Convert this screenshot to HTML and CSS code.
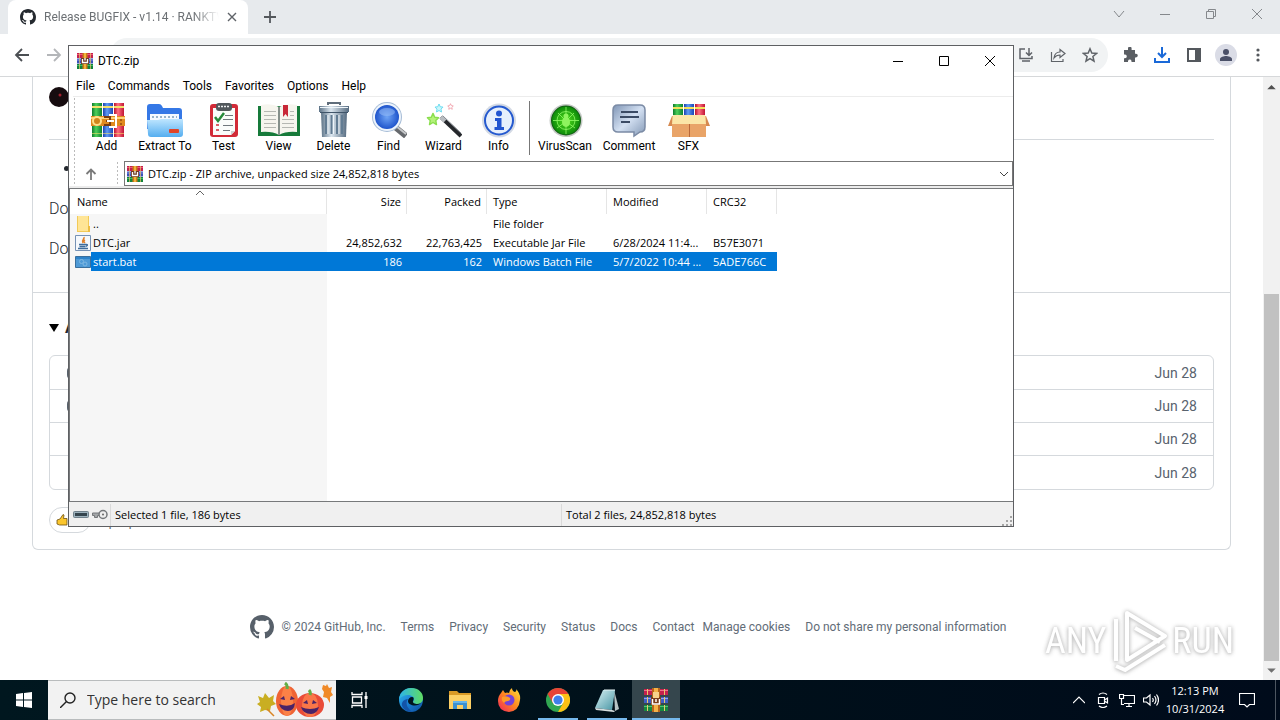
FILE: index.html
```html
<!DOCTYPE html>
<html lang="en">
<head>
<meta charset="utf-8">
<title>Desktop</title>
<link rel="stylesheet" href="styles.css">
</head>
<body>
<svg class="defs" aria-hidden="true">
  <defs>
    <linearGradient id="gRed" x1="0" x2="1" y1="0" y2="0"><stop offset="0" stop-color="#b81230"/><stop offset=".4" stop-color="#ff6f80"/><stop offset="1" stop-color="#c01535"/></linearGradient>
    <linearGradient id="gBlue" x1="0" x2="1" y1="0" y2="0"><stop offset="0" stop-color="#1d3fae"/><stop offset=".4" stop-color="#5f9cf5"/><stop offset="1" stop-color="#1a45b5"/></linearGradient>
    <linearGradient id="gGreen" x1="0" x2="1" y1="0" y2="0"><stop offset="0" stop-color="#0c7a2c"/><stop offset=".4" stop-color="#4fd05a"/><stop offset="1" stop-color="#0d8030"/></linearGradient>
    <linearGradient id="gFolder" x1="0" x2="0" y1="0" y2="1"><stop offset="0" stop-color="#bfe6ff"/><stop offset="1" stop-color="#55aef0"/></linearGradient>
    <linearGradient id="gSteel" x1="0" x2="1" y1="0" y2="0"><stop offset="0" stop-color="#5c7286"/><stop offset=".4" stop-color="#dbe6ef"/><stop offset="1" stop-color="#566b80"/></linearGradient>
    <linearGradient id="gBubble" x1="0" x2="1" y1="0" y2="1"><stop offset="0" stop-color="#7f95b5"/><stop offset=".5" stop-color="#d3e0f2"/><stop offset="1" stop-color="#8398b5"/></linearGradient>
    <radialGradient id="gLens"><stop offset="0" stop-color="#6fa4f5"/><stop offset="1" stop-color="#1f55cc"/></radialGradient>
    <radialGradient id="gScan"><stop offset="0" stop-color="#52e01c"/><stop offset="1" stop-color="#0d8a0a"/></radialGradient>
    <linearGradient id="gEdge" x1="0" x2="1" y1="0" y2="1"><stop offset="0" stop-color="#35c0ec"/><stop offset=".5" stop-color="#1a7fd4"/><stop offset="1" stop-color="#0c4d9b"/></linearGradient>
    <linearGradient id="gEdge2" x1="0" x2="1" y1="0" y2="0"><stop offset="0" stop-color="#2cb5ec"/><stop offset="1" stop-color="#5fdc62"/></linearGradient>
    <linearGradient id="gFox" x1="1" x2="0" y1="0" y2="1"><stop offset="0" stop-color="#ffe43a"/><stop offset=".5" stop-color="#ff8420"/><stop offset="1" stop-color="#f02060"/></linearGradient>
    <linearGradient id="gNote" x1="0" x2="1" y1="0" y2="1"><stop offset="0" stop-color="#d9f2f4"/><stop offset="1" stop-color="#4795a4"/></linearGradient>
    <symbol id="octocat" viewBox="0 0 16 16"><path d="M8 0c4.42 0 8 3.58 8 8a8.013 8.013 0 0 1-5.45 7.59c-.4.08-.55-.17-.55-.38 0-.27.01-1.13.01-2.2 0-.75-.25-1.23-.54-1.48 1.78-.2 3.65-.88 3.65-3.95 0-.88-.31-1.59-.82-2.15.08-.2.36-1.02-.08-2.12 0 0-.67-.22-2.2.82-.64-.18-1.32-.27-2-.27-.68 0-1.36.09-2 .27-1.53-1.03-2.2-.82-2.2-.82-.44 1.1-.16 1.92-.08 2.12-.51.56-.82 1.28-.82 2.15 0 3.06 1.86 3.75 3.64 3.95-.23.2-.44.55-.51 1.07-.46.21-1.61.55-2.33-.66-.15-.24-.6-.83-1.23-.82-.67.01-.27.38.01.53.34.19.73.9.82 1.13.16.45.68 1.31 2.69.94 0 .67.01 1.3.01 1.49 0 .21-.15.45-.55.38A7.995 7.995 0 0 1 0 8c0-4.42 3.58-8 8-8Z"/></symbol>
    <symbol id="star" viewBox="0 0 20 20"><path stroke-width="2" stroke-linejoin="round" d="M10 2l2.500 5.500 5.500.700-4 4 1 5.800-5-3-5 3 1-5.800-4-4 5.500-.7z"/></symbol>
    <symbol id="rar" viewBox="0 0 16 16">
      <path fill="#c4204e" d="M0 0h16v5H0z"/><path fill="#3a52b8" d="M0 5.500h16v5H0z"/><path fill="#12823c" d="M0 11h16v5H0z"/>
      <path fill="#ef5a76" d="M0 1h16v1H0z"/><path fill="#7d8de8" d="M0 6.500h16v1H0z"/><path fill="#41b765" d="M0 12h16v1H0z"/>
      <path fill="#e8c86c" d="M2 0h.7v5H2zm11.300 0h.7v5h-.7zM2 5.500h.7v5H2zm11.300 0h.7v5h-.7zM2 11h.7v5H2zm11.300 0h.7v5h-.7z"/>
      <path fill="#cc7a1a" d="M5.500 0h5v16h-5z"/><path fill="#f1b33c" d="M7 0h2v16H7z"/>
      <path fill="#6e3a20" d="M4 5h8v6H4z"/><path fill="none" stroke="#fff" stroke-width="1.300" d="M5.500 6v3.500h5V6M8 5v2.500"/>
    </symbol>
  </defs>
</svg>

<main class="browser">
  <header class="tabstrip">
    <div class="tab">
      <svg class="i16"><use href="#octocat"/></svg>
      <span class="tab-title">Release BUGFIX - v1.14 · RANKTV</span>
      <button class="bare" aria-label="Close tab"><svg class="i10" viewBox="0 0 10 10" stroke="#5f6368" stroke-width="1.400"><path d="M1 1l8 8M9 1L1 9"/></svg></button>
    </div>
    <button class="bare newtab" aria-label="New tab"><svg class="i12" viewBox="0 0 12 12" stroke="#54585c" stroke-width="1.800"><path d="M6 0v12M0 6h12"/></svg></button>
    <div class="caption">
      <button class="bare" aria-label="Search tabs"><svg class="i12" viewBox="0 0 12 12"><path d="M1 3l5 6 5-6"/></svg></button>
      <button class="bare" aria-label="Minimize"><svg class="i12" viewBox="0 0 12 12"><path d="M1 6.500h10"/></svg></button>
      <button class="bare" aria-label="Restore"><svg class="i12" viewBox="0 0 12 12"><path d="M1.500 3.500h7v7h-7zM3.500 3.500v-2h7v7h-2"/></svg></button>
      <button class="bare" aria-label="Close"><svg class="i12" viewBox="0 0 12 12"><path d="M1 1l10 10M11 1L1 11"/></svg></button>
    </div>
  </header>
  <nav class="toolbar">
    <button class="bare tool" aria-label="Back"><svg class="i16" viewBox="0 0 16 16" fill="none" stroke="#4b4f53" stroke-width="1.800"><path d="M15 8H2M8 2L2 8l6 6"/></svg></button>
    <button class="bare tool" aria-label="Forward"><svg class="i16" viewBox="0 0 16 16" fill="none" stroke="#b4b6b9" stroke-width="1.800"><path d="M1 8h13M8 2l6 6-6 6"/></svg></button>
    <button class="bare tool" aria-label="Reload"></button>
    <div class="omnibox">
      <input aria-label="Address">
      <button class="bare tool" aria-label="Install"><svg class="i16" viewBox="0 0 16 16" fill="none" stroke="#5f6368" stroke-width="1.500"><path d="M7 2H2v9.500h12V9M4 14h8M11 1v7M8 5.500l3 3 3-3"/></svg></button>
      <button class="bare tool" aria-label="Share"><svg class="i16" viewBox="0 0 16 16" fill="none" stroke="#5f6368" stroke-width="1.200"><path d="M1.500 5v9.500H13V12M4 11c.5-4 3-6 6-6V2.500l5 4-5 4V8c-3 0-4.500 1-6 3z"/></svg></button>
      <button class="bare tool" aria-label="Bookmark"><svg class="i16" viewBox="0 0 16 16" fill="none" stroke="#5f6368" stroke-width="1.500"><path d="M8 1.800l1.800 4.300 4.700.4-3.600 3 1.100 4.600-4-2.500-4 2.500 1.100-4.600-3.600-3 4.700-.4z"/></svg></button>
    </div>
    <button class="bare tool" aria-label="Extensions"><svg class="i16" viewBox="0 0 16 16" fill="#5a5e63"><path d="M6 1.500a1.800 1.800 0 0 1 3.600 0V3H13v3.800h1a1.800 1.800 0 0 1 0 3.600h-1V15H9.500v-1a1.800 1.800 0 0 0-3.500 0v1H2v-3.800h1a1.800 1.800 0 0 0 0-3.600H2V3h4z"/></svg></button>
    <button class="bare tool" aria-label="Downloads"><svg class="i16" viewBox="0 0 16 16" fill="none" stroke="#1a69d8" stroke-width="2"><path d="M8 0v10M4 6l4 4 4-4M1 11v4h14v-4"/></svg></button>
    <button class="bare tool" aria-label="Side panel"><svg class="i16" viewBox="0 0 16 16"><path fill="none" stroke="#54585d" stroke-width="2" d="M2 2h12v12H2z"/><path fill="#54585d" d="M9 2h5v12H9z"/></svg></button>
    <button class="bare tool" aria-label="Profile"><svg class="i22" viewBox="0 0 22 22"><circle cx="11" cy="11" r="11" fill="#dadce6"/><circle cx="11" cy="8" r="3" fill="#4a5068"/><path fill="#4a5068" d="M5 17v-2c0-2 4-3 6-3s6 1 6 3v2z"/></svg></button>
    <button class="bare tool" aria-label="Menu"><svg class="i16" viewBox="0 0 16 16" fill="#54585d"><circle cx="8" cy="3" r="1.600"/><circle cx="8" cy="8" r="1.600"/><circle cx="8" cy="13" r="1.600"/></svg></button>
  </nav>
  <div class="viewport">
    <div class="page">
      <article class="release">
        <section class="notes">
          <svg class="avatar" viewBox="0 0 20 20"><circle cx="10" cy="10" r="10" fill="#160c0f"/><circle cx="11" cy="8" r="1.500" fill="#a3202e"/></svg>
          <hr>
          <ul class="changes"><li></li></ul>
          <p>Do</p>
          <p>Do</p>
        </section>
        <section class="assets">
          <h3><svg class="i10" viewBox="0 0 10 10"><path d="M0 1h10L5 9z"/></svg>Assets</h3>
          <ul class="files">
            <li><svg class="i16" viewBox="0 0 16 16"><rect x="2" y="3" width="13" height="10" rx="3" fill="none" stroke="#59636e" stroke-width="2"/></svg><time>Jun 28</time></li>
            <li><svg class="i16" viewBox="0 0 16 16"><rect x="2" y="3" width="13" height="10" rx="3" fill="none" stroke="#59636e" stroke-width="2"/></svg><time>Jun 28</time></li>
            <li><svg class="i16" viewBox="0 0 16 16"><path fill="none" stroke="#59636e" stroke-width="1.500" d="M3 1h11v14H3z"/></svg><time>Jun 28</time></li>
            <li><svg class="i16" viewBox="0 0 16 16"><path fill="none" stroke="#59636e" stroke-width="1.500" d="M3 1h11v14H3z"/></svg><time>Jun 28</time></li>
          </ul>
          <div class="reactions">
            <button class="pill" aria-label="Thumbs up"><svg class="i12" viewBox="0 0 12 12"><path fill="#fbc62d" stroke="#6e5210" stroke-width=".8" d="M1 6l3-1 3-4.500 1 .5-.5 3.500H11v6.500H3.500L1 10z"/></svg></button>
            <span>2 people reacted</span>
          </div>
        </section>
      </article>
      <footer class="footer">
        <svg class="i24"><use href="#octocat"/></svg>
        <span class="copy">© 2024 GitHub, Inc.</span>
        <a href="#">Terms</a><a href="#">Privacy</a><a href="#">Security</a><a href="#">Status</a><a href="#">Docs</a><a href="#" class="tight">Contact</a><button class="bare">Manage cookies</button><button class="bare">Do not share my personal information</button>
      </footer>
    </div>
    <div class="scrollbar">
      <svg viewBox="0 0 16 18"><path fill="#505050" d="M4 11.500l4-4 4 4z"/></svg>
      <div class="track"><div class="thumb"></div></div>
      <svg viewBox="0 0 16 18"><path fill="#707070" d="M4 7l4 4 4-4z"/></svg>
    </div>
  </div>
</main>

<section class="window" aria-label="DTC.zip">
  <header class="titlebar">
    <svg class="i16"><use href="#rar"/></svg>
    <h1>DTC.zip</h1>
    <button class="bare" aria-label="Minimize"><svg class="i12" viewBox="0 0 12 12"><path d="M1 6.500h10"/></svg></button>
    <button class="bare" aria-label="Maximize"><svg class="i12" viewBox="0 0 12 12"><path d="M1.500 1.500h9v9h-9z"/></svg></button>
    <button class="bare" aria-label="Close"><svg class="i12" viewBox="0 0 12 12"><path d="M1 1l10 10M11 1L1 11"/></svg></button>
  </header>
  <nav class="menu">
    <button class="bare">File</button><button class="bare">Commands</button><button class="bare">Tools</button><button class="bare">Favorites</button><button class="bare">Options</button><button class="bare">Help</button>
  </nav>
  <div class="actions">
    <button class="bare"><svg viewBox="0 0 36 36">
      <path fill="url(#gGreen)" d="M3 1h10v34H3z"/><path fill="url(#gBlue)" d="M14 1h10v34H14z"/><path fill="url(#gRed)" d="M25 1h10v34H25z"/>
      <path fill="#f4e06a" d="M3 4h10v2H3zm11 0h10v2H14zm11 0h10v2H25z"/><path fill="#f4e06a" opacity=".6" d="M3 31h10v1H3zm11 0h10v1H14zm11 0h10v1H25z"/>
      <path fill="#e08a20" d="M2 14h34v10H2z"/><path fill="#ffd37a" d="M2 15h34v2H2z"/><circle cx="8" cy="19" r="5" fill="#ffe08a"/><circle cx="8" cy="19" r="3" fill="#d0851c"/><path fill="#a65a14" d="M31 17h2v2h-2zm0 4h2v2h-2z"/>
      <path fill="none" stroke="#7a3d10" stroke-width="2" d="M15 15h6v8h-6M17 19h4"/><path fill="none" stroke="#fff" stroke-width="2" d="M20 13h7v12h-7M18 19h7"/></svg>Add</button>
    <button class="bare extract"><svg viewBox="0 0 36 36">
      <path fill="#3578e6" d="M0 5q0-3 3-3h9q2 0 3 2l1 2h16q3 0 3 3v18H0z"/><path fill="#f5faff" d="M3 12h29v10H3z"/><path stroke="#7a9dba" stroke-width="1.500" stroke-dasharray="2 2" d="M5 15h25"/>
      <path fill="url(#gFolder)" d="M0 18h11l3-1h22v15q0 3-3 3H4q-3 0-3-3z"/><rect x="22" y="27" width="10" height="4" rx="1" fill="#e04428"/></svg>Extract To</button>
    <button class="bare"><svg viewBox="0 0 36 36">
      <rect x="4" y="2" width="28" height="33" rx="3" fill="#d22b38"/><path fill="#fafcfb" d="M7 6h22v23l-4 4H7z"/><path fill="#cdd2d4" d="M29 29l-4 4v-4z"/><rect x="10" y="1" width="16" height="8" rx="3" fill="#52585c"/><path stroke="#eef0f1" stroke-width="1.500" stroke-dasharray="2 1" d="M12 4.500h12"/>
      <path fill="none" stroke="#258a3a" stroke-width="2.500" d="M9 15l3 4 6-8"/><path stroke="#70787e" d="M19 13.500h8M17 17.500h10M17 23.500h10M17 28.500h7"/><path stroke="#d22b38" stroke-width="1.500" d="M10 23h3M10 28h3"/></svg>Test</button>
    <button class="bare"><svg class="book" viewBox="0 0 44 36">
      <path fill="#167a3a" d="M1 4h42v30H1z"/><path fill="#f6f5ee" d="M4 3q11-2 18 2 7-4 18-2v27q-11-1-18 3-7-4-18-3z"/><path stroke="#85908a" stroke-width="2" d="M22 5v28"/>
      <path stroke="#b6b8b2" d="M7 9.500h12M7 13.500h12M7 17.500h12M7 21.500h12M7 25.500h12M25 17.500h12M25 21.500h12M25 25.500h12M33 13.500h4M33 9.500h4"/><path fill="#c82838" d="M26 3h5v12l-2.500-3-2.500 3z"/></svg>View</button>
    <button class="bare"><svg viewBox="0 0 36 36">
      <path fill="none" stroke="#5f6d7b" stroke-width="2" d="M12 3V1h12v2"/><path fill="url(#gSteel)" d="M3 4h30v6H3z"/><path fill="url(#gSteel)" d="M5 10h26l-1 25H6z"/><path stroke="#627c93" stroke-width="2" d="M10 13v19M15.500 13v19M21 13v19M26 13v19"/><path stroke="#eef5fa" d="M12 13v19M17.500 13v19M23 13v19M4 5.500h28"/><path stroke="#40556a" d="M4 10.500h28"/></svg>Delete</button>
    <button class="bare"><svg viewBox="0 0 36 36">
      <path stroke="#66696d" stroke-width="6" d="M24 25l11 9"/><path stroke="#c6c8ca" stroke-width="2" d="M25 24l10 8"/><circle cx="16" cy="15" r="15" fill="#a6bcd6"/><circle cx="16" cy="15" r="14" fill="#edf4fc"/><circle cx="16" cy="15" r="12" fill="url(#gLens)"/><ellipse cx="16" cy="10" rx="8" ry="4" fill="#9fc4fa" opacity=".5"/></svg>Find</button>
    <button class="bare"><svg viewBox="0 0 36 36">
      <path stroke="#25282c" stroke-width="4" d="M15 15l20 19"/><path stroke="#b8bcc0" stroke-width="4" d="M15 15l4 4"/><path stroke="#8b9096" d="M17 14l18 17"/>
      <use href="#star" x="0" y="10" width="14" height="14" fill="#b4f27a" stroke="#8ade4e"/><use href="#star" x="8" y="1" width="10" height="10" fill="#c9f7fc" stroke="#6cdcf0"/><use href="#star" x="21" y="1" width="7" height="7" fill="#fff" stroke="#ee8c98"/></svg>Wizard</button>
    <button class="bare"><svg viewBox="0 0 36 36">
      <circle cx="18" cy="18.500" r="17" fill="#d4dae4"/><circle cx="18" cy="18.500" r="14" fill="#e6effc" stroke="#2459cf" stroke-width="2"/><circle cx="18" cy="11.500" r="3" fill="#2154d0"/><path fill="#2154d0" d="M14 16h6.500v9H23v3H13.500v-3H16v-6h-2z"/></svg>Info</button>
    <span class="rule"></span>
    <button class="bare wide"><svg viewBox="0 0 36 36">
      <circle cx="19" cy="18.500" r="16.500" fill="#c5c9c6"/><circle cx="19" cy="18.500" r="15" fill="#145c14"/><circle cx="19" cy="18.500" r="14" fill="url(#gScan)"/><g fill="none" stroke="#92fb68" stroke-width=".8"><circle cx="19" cy="18.500" r="9"/><path d="M19 5v27M6 18.500h26M11 11l6 6M27 11l-6 6M10 26l7-5M28 26l-7-5"/></g><ellipse cx="19" cy="20" rx="4" ry="5" fill="#8ef45e"/><circle cx="19" cy="14" r="2.500" fill="#8ef45e"/></svg>VirusScan</button>
    <button class="bare wide"><svg viewBox="0 0 36 36">
      <path fill="url(#gBubble)" stroke="#7b8ba5" stroke-width="1.500" d="M7 3h22q5 0 5 5v17q0 5-5 5l-6 4v-4H7q-5 0-5-5V8q0-5 5-5z"/><path stroke="#3b4b65" stroke-width="2" d="M10 10h17M9 15h19M10 20h9"/></svg>Comment</button>
    <button class="bare"><svg class="book" viewBox="0 0 44 36">
      <path fill="url(#gGreen)" d="M6 2h10v14H6z"/><path fill="url(#gBlue)" d="M17 2h10v14H17z"/><path fill="url(#gRed)" d="M28 2h10v14H28z"/><path fill="#f4e25c" d="M6 5h10v2H6zm11 0h10v2H17zm11 0h10v2H28z"/>
      <path fill="#e9a468" d="M5 14h34v21H5z"/><path fill="#d68a50" d="M5 14l-4 10h4zM39 14l4 10h-4z"/><path fill="#fbe6a8" d="M6 13h32l1 9H5z"/><path stroke="#b9683a" d="M22.500 22v13"/></svg>SFX</button>
  </div>
  <div class="pathbar">
    <button class="bare up" aria-label="Up"><svg class="i12" viewBox="0 0 12 12" fill="none" stroke="#7a7a7a" stroke-width="1.800"><path d="M6 12V1.500M1.500 6L6 1.500 10.500 6"/></svg></button>
    <div class="path">
      <svg class="i16"><use href="#rar"/></svg>
      <select aria-label="Location"><option>DTC.zip - ZIP archive, unpacked size 24,852,818 bytes</option></select>
      <svg class="i10" viewBox="0 0 10 10" fill="none" stroke="#444"><path d="M1 3l4 4 4-4"/></svg>
    </div>
  </div>
  <div class="list">
    <table>
      <colgroup><col class="c-name"><col class="c-num"><col class="c-num"><col class="c-type"><col class="c-mod"><col class="c-crc"></colgroup>
      <thead><tr><th class="sorted">Name<svg class="i10" viewBox="0 0 10 10" fill="none" stroke="#666"><path d="M1 7l4-4 4 4"/></svg></th><th class="num">Size</th><th class="num">Packed</th><th>Type</th><th>Modified</th><th>CRC32</th></tr></thead>
      <tbody>
        <tr><td><div class="name"><svg class="i16" viewBox="0 0 16 16"><path fill="#f2ca58" d="M2 0h12v16H2z"/><path fill="#ffe596" d="M3 0h10v15H3z"/><path fill="#edbd44" d="M13 10h2v6h-2z"/></svg><span>..</span></div></td><td></td><td></td><td>File folder</td><td></td><td></td></tr>
        <tr><td><div class="name"><svg class="i16" viewBox="0 0 16 16"><path fill="#f5f8fc" stroke="#7692b5" d="M.5.500h15v15H.5z"/><path fill="none" stroke="#e0802a" stroke-width="1.500" d="M9 2c1 2-3 3-1 6M10 5c-2 1-1 2 0 3"/><path fill="none" stroke="#3e6c9c" stroke-width="1.300" d="M4 9.500h7M4.500 11.500h6M3 13.500h10M11 9.500q3 0 0 2"/></svg><span>DTC.jar</span></div></td><td class="num">24,852,632</td><td class="num">22,763,425</td><td>Executable Jar File</td><td>6/28/2024 11:4...</td><td>B57E3071</td></tr>
        <tr class="selected"><td><div class="name"><svg class="i16" viewBox="0 0 16 16"><path fill="#4f9ad6" stroke="#3a6f9d" d="M.5 2.500h15v11H.5z"/><path fill="#2f83c9" d="M1 3h14v2H1z"/><g fill="none" stroke="#7fb8e2"><circle cx="6.500" cy="7.500" r="2"/><circle cx="10" cy="10" r="2"/></g></svg><span>start.bat</span></div></td><td class="num">186</td><td class="num">162</td><td>Windows Batch File</td><td>5/7/2022 10:44 ...</td><td>5ADE766C</td></tr>
      </tbody>
    </table>
  </div>
  <footer class="status">
    <div class="lamps"><svg class="i16" viewBox="0 0 16 16"><rect x=".5" y="4.500" width="15" height="6" rx="1" fill="#9db2bd" stroke="#71818b"/><path fill="#35454e" d="M2 6h12v3H2z"/></svg><svg class="i16" viewBox="0 0 16 16"><path fill="#a3a6a8" stroke="#74777a" d="M.5 6h9v2.500h-4v2h-3v-2h-2z"/><circle cx="11" cy="7.500" r="4" fill="#eee" stroke="#74777a" stroke-width="1.500"/><circle cx="11" cy="7.500" r="1" fill="#666"/></svg></div>
    <div class="left">Selected 1 file, 186 bytes</div>
    <div class="right">Total 2 files, 24,852,818 bytes</div>
    <svg class="i10" viewBox="0 0 10 10" fill="#a4a4a4"><path d="M8 0h2v2H8zM8 4h2v2H8zM8 8h2v2H8zM4 4h2v2H4zM4 8h2v2H4zM0 8h2v2H0z"/></svg>
  </footer>
</section>

<div class="watermark" aria-hidden="true">
  <span>ANY</span>
  <svg viewBox="0 0 58 66" fill="none" stroke="#fff" stroke-width="4" stroke-linejoin="round"><path d="M17 5v33M17 5l38 23-38 24zM6 11v42M6 58l9 4 40-25M25 20l25 14"/></svg>
  <span>RUN</span>
</div>

<footer class="taskbar">
  <button class="bare start" aria-label="Start"><svg class="i16" viewBox="0 0 16 16" fill="#fff"><path d="M0 2l7-1v6.500H0zM8 1l8-1v7.500H8zM0 8.500h7V15l-7-1zM8 8.500h8V16l-8-1z"/></svg></button>
  <label class="search">
    <svg class="i16" viewBox="0 0 16 16" fill="none" stroke="#222" stroke-width="1.400"><circle cx="10" cy="6" r="5"/><path d="M6.500 9.500L0 16"/></svg>
    <input placeholder="Type here to search" aria-label="Type here to search">
    <svg class="pumpkins" viewBox="0 0 76 36">
      <path fill="#c9ae22" d="M1 14l5 2 2-5 4 5 5-3-1 6 3 3-5 2-1 5-5-1-5 2 1-5-4-3 3-2z"/><path stroke="#d98525" stroke-width="1.500" d="M10 27l7 7"/>
      <path fill="#f08a28" d="M66 3l3 1 1-2 2 4 3-1-1 5 2 3-3 2v6l-3-5-4-1 1-5-2-3z"/>
      <ellipse cx="30" cy="19" rx="11" ry="15" fill="#ef6435"/><ellipse cx="30" cy="19" rx="6" ry="15" fill="#fb8147"/><path stroke="#63ad45" stroke-width="3" fill="none" d="M30 7q1-4-2-6"/>
      <ellipse cx="53" cy="23" rx="14" ry="12" fill="#e94c38"/><ellipse cx="53" cy="23" rx="8" ry="12" fill="#fa7748"/><path stroke="#63ad45" stroke-width="3" fill="none" d="M53 13q1-3-1-5"/>
      <path fill="#4a2367" d="M23 17l4-3 1 4zM33 18l1-4 4 3zM22 22q9 4 16-1-1 8-7 8-7 0-9-7zM46 21l4-3 1 4zM55 22l1-4 4 3zM44 25q9 4 18 0-2 7-8 7-8 0-10-7z"/></svg>
  </label>
  <nav class="apps">
    <button class="bare taskview" aria-label="Task view"><svg class="i18" viewBox="0 0 18 18" fill="none" stroke="#fff" stroke-width="1.300"><path d="M1 1v2.500h10V1M1 17v-2.500h10V17M1.500 6h9v6h-9zM15 1v16"/><path fill="#fff" stroke="none" d="M13.500 5h3v3h-3z"/></svg></button>
    <button class="bare" aria-label="Edge"><svg class="i24" viewBox="0 0 24 24"><circle cx="12" cy="12" r="12" fill="url(#gEdge)"/><path fill="url(#gEdge2)" d="M0 11C1 4 6 0 12 0c8 0 12 5 12 10 0 4-3 6-6 6-3 0-4-1-4-2s1-1 1-3c0-2-3-4-6-4-4 0-7 2-9 4z"/><path fill="#00151e" d="M13 9c2 0 2 2 1 4-1 3 5 4 8 2-3 4-13 3-13-2 0-2 2-4 4-4z"/><path fill="#1354a8" d="M9 11c-3 4-1 10 5 13C6 24 2 19 3 15c1-3 4-4 6-4z"/></svg></button>
    <button class="bare" aria-label="File Explorer"><svg class="i22" viewBox="0 0 22 22"><path fill="#d99a26" d="M0 2h8l2 2h12v5H0z"/><path fill="#fcd065" d="M0 6h22v14H0z"/><path fill="#3d91d0" d="M4 12h14v8h-4v-4H8v4H4z"/><path fill="#66b5eb" d="M4 12h14v2H4z"/></svg></button>
    <button class="bare" aria-label="Firefox"><svg class="i24" viewBox="0 0 24 24"><path fill="url(#gFox)" d="M4 5l2-3 2 3q2-1 4 0 0-3 3-5 0 3 3 4 2-1 1-3 5 5 4 11-1 11-11 12Q1 23 1 13q0-5 3-8z"/><circle cx="12" cy="12" r="5.500" fill="#7542d8"/><path fill="#ff9a28" d="M5 9q5-2 8 1 1 2-2 3-3 0-4 2-3-2-2-6z"/></svg></button>
    <button class="bare open" aria-label="Chrome"><svg class="i24" viewBox="0 0 24 24"><circle cx="12" cy="12" r="12" fill="#31a752"/><path fill="#e84335" d="M12 12L1.600 6A12 12 0 0 1 22.400 6z"/><path fill="#fbc116" d="M12 6h10.400A12 12 0 0 1 12 24l5.200-9z"/><path fill="#e84335" d="M1.600 6l5.200 9L12 6z"/><circle cx="12" cy="12" r="6" fill="#fff"/><circle cx="12" cy="12" r="4.600" fill="#3f7fea"/></svg></button>
    <button class="bare open" aria-label="Notepad"><svg class="i24" viewBox="0 0 24 24"><path fill="#b8c4c6" d="M19 2l5 19-4 2z"/><path fill="url(#gNote)" d="M8 2h12l-3 20-17-2z"/><path fill="#d5dedf" d="M0 20l17 2 3 1-1 1L1 22z"/><path stroke="#e4f3f5" d="M9 2h11"/></svg></button>
    <button class="bare open active" aria-label="WinRAR"><svg class="i24" viewBox="0 0 24 24">
      <path fill="#c4204e" d="M0 1h24v6H0z"/><path fill="#3f5cc4" d="M0 9h24v6H0z"/><path fill="#16883f" d="M0 17h24v6H0z"/><path fill="#f0708a" d="M0 2h24v1H0z"/><path fill="#8fa2f0" d="M0 10h24v1H0z"/><path fill="#52c275" d="M0 18h24v1H0z"/><path fill="#e8c86c" d="M3 1h1v6H3zm17 0h1v6h-1zM3 9h1v6H3zm17 0h1v6h-1zM3 17h1v6H3zm17 0h1v6h-1z"/>
      <path fill="#b8651a" d="M8 0h8v24H8z"/><path fill="#f4b248" d="M10 0h4v24h-4z"/><path fill="#7a3d1c" d="M7 9h10v8H7z"/><path fill="#f7d28c" d="M9 4h6v6H9z"/><path fill="none" stroke="#fff" stroke-width="1.500" d="M8.500 11v5h7v-5M12 11v3"/></svg></button>
  </nav>
  <div class="tray">
    <button class="bare" aria-label="Hidden icons"><svg class="i12" viewBox="0 0 12 12"><path d="M0 9l6-6 6 6"/></svg></button>
    <button class="bare" aria-label="Meet now"><svg class="i16" viewBox="0 0 16 16"><path d="M3.500 5.500h6v6h-6zM9.500 8l3-2v5l-3-2M4 2.500q4-3 8 0M4 14q4 3 8 0"/></svg></button>
    <button class="bare" aria-label="Network"><svg class="i16" viewBox="0 0 16 16"><path d="M5 3.500h10.500v8H5M2.500 7v5.500H5M7 14.500h6M10 12v2M.5 2.500h4v4h-4z"/></svg></button>
    <button class="bare" aria-label="Volume"><svg class="i16" viewBox="0 0 16 16"><path d="M.5 6h3L7 3v10l-3.500-3h-3zM9.500 6q1.500 2 0 4M11.500 4q3 4 0 8M13.500 2.500q4 5.500 0 11"/></svg></button>
    <button class="bare clock"><span>12:13 PM</span><span>10/31/2024</span></button>
    <button class="bare notify" aria-label="Notifications"><svg class="i16" viewBox="0 0 16 16"><path d="M.5 1.500h15v11h-5L8 15l-2.500-2.500h-5z"/></svg></button>
  </div>
</footer>
</body>
</html>
```
FILE: styles.css
```css
* { box-sizing: border-box; }
body {
  margin: 0;
  height: 100vh;
  display: flex;
  flex-direction: column;
  position: relative;
  overflow: hidden;
  font: 12px/16px Roboto, "Open Sans", sans-serif;
  color: #000;
  background: #fff;
}
.defs { position: absolute; width: 0; height: 0; }
h1, h3, p, ul { margin: 0; padding: 0; font: inherit; list-style: none; }
input, select, button { font: inherit; color: inherit; }
svg { display: block; flex: none; }
.bare {
  border: 0;
  padding: 0;
  background: none;
  display: flex;
  align-items: center;
  justify-content: center;
}
.i10 { width: 10px; height: 10px; }
.i12 { width: 12px; height: 12px; }
.i16 { width: 16px; height: 16px; }
.i18 { width: 18px; height: 18px; }
.i22 { width: 22px; height: 22px; }
.i24 { width: 24px; height: 24px; }

/* Browser */
.browser { flex: 1; min-height: 0; display: flex; flex-direction: column; }
.tabstrip { height: 34px; display: flex; background: #e7eaed; padding-left: 8px; }
.tab {
  width: 240px;
  display: flex;
  align-items: center;
  gap: 8px;
  padding: 0 11px 0 12px;
  background: #fff;
  border-radius: 8px 8px 0 0;
  color: #6c7074;
  fill: #24292f;
}
.tab-title {
  flex: 1;
  overflow: hidden;
  white-space: nowrap;
  mask-image: linear-gradient(to right, #000 85%, transparent);
}
.newtab { width: 44px; }
.caption { margin-left: auto; display: flex; height: 28px; }
.caption .bare { width: 46px; fill: none; stroke: #85888c; }
.toolbar {
  height: 43px;
  display: flex;
  align-items: center;
  padding: 0 6px;
  border-bottom: 1px solid #d6d8da;
}
.tool { width: 32px; height: 32px; }
.omnibox {
  flex: 1;
  display: flex;
  height: 34px;
  align-items: center;
  margin: 0 6px 0 8px;
  padding-right: 2px;
  border-radius: 17px;
  background: #f1f3f4;
}
.omnibox input { flex: 1; min-width: 0; border: 0; background: none; }
.viewport { flex: 1; min-height: 0; display: flex; }
.page { flex: 1; padding: 0 32px; }
.release {
  border: 1px solid #d5d9dd;
  border-top: 0;
  border-radius: 0 0 6px 6px;
  color: #24292f;
  font-size: 16px;
}
.notes { padding: 10px 16px 32px; border-bottom: 1px solid #d5d9dd; line-height: 24px; }
.notes p { font-weight: 300; }
.avatar { width: 20px; height: 20px; }
.notes hr { margin: 32px 0 17px; border: 0; border-top: 1px solid #d5d9dd; }
.changes { padding-left: 32px; margin-bottom: 16px; list-style: disc; }
.notes p + p { margin-top: 16px; }
.notes { padding-bottom: 31px; }
.assets { padding: 24px 16px 16px; }
.assets h3 { display: flex; align-items: center; gap: 6px; font-weight: 700; line-height: 22px; margin-bottom: 16px; }
.files { border: 1px solid #d5d9dd; border-radius: 6px; font-size: 14px; color: #59636e; }
.files li { display: flex; align-items: center; justify-content: space-between; height: 33px; padding: 0 16px; }
.files li + li { border-top: 1px solid #d5d9dd; }
.files li:last-child { height: 34px; }
.reactions { display: flex; align-items: center; gap: 8px; margin-top: 17px; font-size: 12px; color: #59636e; }
.reactions span { padding-top: 4px; }
.pill { width: 42px; height: 26px; padding: 0 6px; border: 1px solid #d5d9dd; border-radius: 13px; background: #fff; }
.footer {
  display: flex;
  justify-content: center;
  align-items: center;
  gap: 15px;
  margin-top: 65px;
  padding-right: 7px;
  color: #626c77;
  fill: #57606a;
  white-space: nowrap;
}
.footer a { color: inherit; text-decoration: none; }
.copy, .tight + .bare { margin-left: -7px; }
.scrollbar { width: 17px; display: flex; flex-direction: column; background: #f1f1f1; }
.track { flex: 1; display: flex; flex-direction: column; justify-content: flex-end; padding: 0 1px; }
.thumb { height: 65%; background: #c1c1c1; }

/* Archive window */
.window {
  position: absolute;
  left: 68px;
  top: 45px;
  width: 946px;
  height: 482px;
  display: flex;
  flex-direction: column;
  border: 1px solid #5e6063;
  background: #fff;
}
.titlebar { height: 30px; display: flex; align-items: center; gap: 5px; padding: 0 3px 0 8px; }
.titlebar h1 { flex: 1; }
.titlebar .bare { width: 41px; height: 30px; fill: none; stroke: #000; }
.menu { display: flex; gap: 13px; height: 20px; padding-left: 7px; }
.actions {
  display: flex;
  height: 65px;
  margin-left: 4px;
  padding-left: 6px;
  border-top: 1px solid #ececec;
  background: radial-gradient(circle, #bbb 1px, transparent 1px) 0 0 / 3px 4px repeat-y;
}
.actions .bare { width: 55px; flex-direction: column; justify-content: flex-start; padding-top: 5px; }
.actions svg { width: 36px; height: 36px; }
.actions .book { width: 44px; }
.actions .extract { width: 62px; }
.actions .wide { width: 64px; }
.rule { width: 1px; height: 54px; margin: 4px 3px; background: #777; }
.pathbar { display: flex; height: 27px; margin-left: 4px; padding-bottom: 2px; background: radial-gradient(circle, #bbb 1px, transparent 1px) 0 0 / 3px 4px repeat-y; }
.up { width: 51px; padding-right: 16px; background: radial-gradient(circle, #bbb 1px, transparent 1px) 43px 0 / 3px 4px repeat-y; }
.path { flex: 1; display: flex; align-items: center; gap: 5px; padding: 0 3px 0 2px; border: 1px solid #777; background: #fff; }
.path select { flex: 1; appearance: none; border: 0; padding: 0; background: none; }
.path select, .list, .status, .clock { font: 11px/16px "Open Sans", sans-serif; }
.list {
  flex: 1;
  border: solid #77797b;
  border-width: 1px 0 1px 1px;
  box-shadow: 0 -2px #ececec;
  background: linear-gradient(#f6f6f6, #f6f6f6) 0 25px / 257px 100% no-repeat #fff;
}
table { width: 707px; table-layout: fixed; border-collapse: separate; border-spacing: 0; }
.c-name { width: 257px; }
.c-num { width: 80px; }
.c-type { width: 120px; }
.c-mod { width: 100px; }
.c-crc { width: 70px; }
th { height: 25px; padding: 0 5px 0 7px; text-align: left; font-weight: 400; border-right: 1px solid #e5e5e5; background: #fff; }
th:nth-child(n+4) { padding: 0 6px; }
.sorted { position: relative; }
.sorted svg { position: absolute; left: 125px; top: -1px; }
td { height: 19px; padding: 0 5px 0 6px; white-space: nowrap; overflow: hidden; }
td:first-child { padding: 0 0 0 5px; }
.num { text-align: right; }
.name { display: flex; align-items: center; height: 19px; }
.name span { flex: 1; padding-left: 2px; line-height: 19px; }
.selected td { color: #fff; background: #0078d7; }
.selected td:first-child { background: #f6f6f6; }
.selected .name span { background: #0078d7; }
.status { display: flex; align-items: center; height: 24px; padding: 2px 1px 0 4px; background: #f0f0f0; }
.lamps { display: flex; gap: 3px; width: 37px; }
.status .left, .status .right { padding-left: 4px; line-height: 22px; border-left: 1px solid #dadada; }
.status .left { width: 451px; }
.status .right { flex: 1; }
.status > .i10 { align-self: flex-end; }

/* Watermark */
.watermark {
  position: absolute;
  right: 46px;
  bottom: 46px;
  display: flex;
  align-items: center;
  gap: 4px;
  font: 400 36px/40px "Roboto Condensed", "Liberation Sans Narrow", Roboto, sans-serif;
  color: #fff;
  filter: drop-shadow(0 0 2px #bbb) drop-shadow(0 1px 1px #ddd);
}
.watermark svg { width: 58px; height: 66px; }

/* Taskbar */
.taskbar { height: 40px; display: flex; background: linear-gradient(to right, #00171f, #00101a 55%, #000b1b); color: #fff; }
.start { width: 48px; }
.search { width: 288px; display: flex; align-items: center; gap: 11px; padding: 0 3px 0 12px; border: 1px solid #b9bcbd; border-width: 1px 0; background: #f2f2f2; }
.search input { flex: 1; min-width: 0; padding: 0; border: 0; background: none; font: 14px/20px "Open Sans", sans-serif; }
.search input::placeholder { color: #333; opacity: 1; }
.pumpkins { width: 76px; height: 36px; }
.apps { display: flex; gap: 1px; }
.apps .bare { width: 48px; position: relative; }
.taskview { margin-right: 2px; }
.open::after { content: ""; position: absolute; left: 4px; right: 4px; bottom: 0; height: 2px; background: #76b9ed; }
.active { background: #35464d; }
.active::after { left: 0; right: 0; }
.tray { display: flex; margin-left: auto; margin-right: 4px; border-right: 1px solid #4d5661; }
.tray .bare { width: 24px; fill: none; stroke: #fff; stroke-width: 1.2px; }
.tray .clock { width: 64px; flex-direction: column; line-height: 18px; }
.tray .clock span { stroke: none; }
.tray .notify { width: 40px; margin-right: 8px; }
```
